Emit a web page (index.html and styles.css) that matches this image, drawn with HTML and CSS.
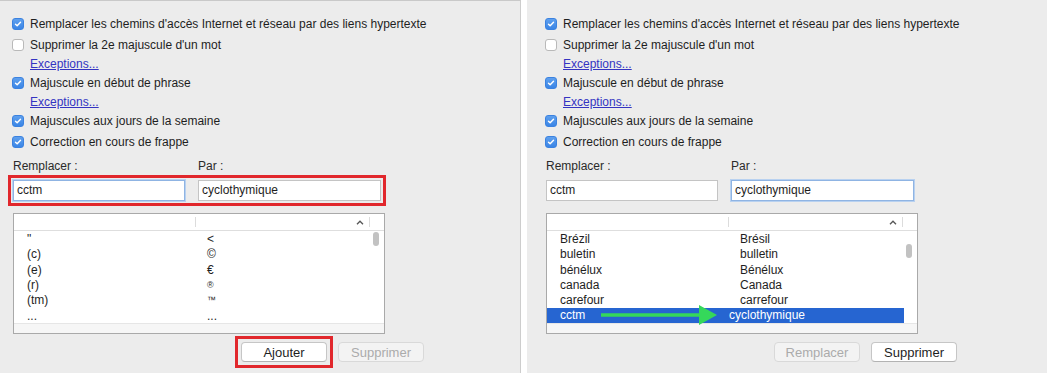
FILE: index.html
```html
<!DOCTYPE html>
<html lang="fr">
<head>
    <meta charset="UTF-8">
    <title>Correction automatique</title>
    <link rel="stylesheet" href="styles.css">
</head>
<body>
<div class="screen">

    <!-- left: before adding the entry -->
    <section class="panel panel-left">
        <div class="options">
            <label class="check-row"><span class="box on"><svg viewBox="0 0 12 12"><path d="M3 6.2l2 2L9 3.8"/></svg></span>Remplacer les chemins d'accès Internet et réseau par des liens hypertexte</label>
            <label class="check-row"><span class="box"></span>Supprimer la 2e majuscule d'un mot</label>
            <div class="link-row"><a href="#">Exceptions...</a></div>
            <label class="check-row"><span class="box on"><svg viewBox="0 0 12 12"><path d="M3 6.2l2 2L9 3.8"/></svg></span>Majuscule en début de phrase</label>
            <div class="link-row"><a href="#">Exceptions...</a></div>
            <label class="check-row"><span class="box on"><svg viewBox="0 0 12 12"><path d="M3 6.2l2 2L9 3.8"/></svg></span>Majuscules aux jours de la semaine</label>
            <label class="check-row"><span class="box on"><svg viewBox="0 0 12 12"><path d="M3 6.2l2 2L9 3.8"/></svg></span>Correction en cours de frappe</label>
        </div>

        <div class="labels">
            <span>Remplacer :</span>
            <span>Par :</span>
        </div>
        <div class="fields marked">
            <div class="field focus">cctm</div>
            <div class="field">cyclothymique</div>
        </div>

        <div class="table">
            <div class="thead">
                <span class="th"></span>
                <span class="th th-sort"><svg viewBox="0 0 8 5"><path d="M1 4.2L4 1.2l3 3"/></svg></span>
            </div>
            <div class="scroll-head"></div>
            <div class="rows">
                <div class="row"><span>"</span><span>&lt;</span></div>
                <div class="row"><span>(c)</span><span>©</span></div>
                <div class="row"><span>(e)</span><span>€</span></div>
                <div class="row"><span>(r)</span><span class="small">®</span></div>
                <div class="row"><span>(tm)</span><span class="small">™</span></div>
                <div class="row"><span>...</span><span>...</span></div>
            </div>
            <div class="scroll"><div class="thumb"></div></div>
            <div class="table-foot"></div>
        </div>

        <div class="buttons">
            <span class="marked btn-mark"><button class="btn">Ajouter</button></span>
            <button class="btn" disabled>Supprimer</button>
        </div>
    </section>

    <!-- right: after adding the entry -->
    <section class="panel panel-right">
        <div class="options">
            <label class="check-row"><span class="box on"><svg viewBox="0 0 12 12"><path d="M3 6.2l2 2L9 3.8"/></svg></span>Remplacer les chemins d'accès Internet et réseau par des liens hypertexte</label>
            <label class="check-row"><span class="box"></span>Supprimer la 2e majuscule d'un mot</label>
            <div class="link-row"><a href="#">Exceptions...</a></div>
            <label class="check-row"><span class="box on"><svg viewBox="0 0 12 12"><path d="M3 6.2l2 2L9 3.8"/></svg></span>Majuscule en début de phrase</label>
            <div class="link-row"><a href="#">Exceptions...</a></div>
            <label class="check-row"><span class="box on"><svg viewBox="0 0 12 12"><path d="M3 6.2l2 2L9 3.8"/></svg></span>Majuscules aux jours de la semaine</label>
            <label class="check-row"><span class="box on"><svg viewBox="0 0 12 12"><path d="M3 6.2l2 2L9 3.8"/></svg></span>Correction en cours de frappe</label>
        </div>

        <div class="labels">
            <span>Remplacer :</span>
            <span>Par :</span>
        </div>
        <div class="fields">
            <div class="field">cctm</div>
            <div class="field focus">cyclothymique</div>
        </div>

        <div class="table">
            <div class="thead">
                <span class="th"></span>
                <span class="th th-sort"><svg viewBox="0 0 8 5"><path d="M1 4.2L4 1.2l3 3"/></svg></span>
            </div>
            <div class="scroll-head"></div>
            <div class="rows">
                <div class="row"><span>Brézil</span><span>Brésil</span></div>
                <div class="row"><span>buletin</span><span>bulletin</span></div>
                <div class="row"><span>bénélux</span><span>Bénélux</span></div>
                <div class="row"><span>canada</span><span>Canada</span></div>
                <div class="row"><span>carefour</span><span>carrefour</span></div>
                <div class="row selected">
                    <span>cctm</span><span>cyclothymique</span>
                    <svg class="arrow" viewBox="0 0 116 20"><path d="M0 8.3h98V0l18 10-18 10v-8.3H0z"/></svg>
                </div>
            </div>
            <div class="scroll"><div class="thumb thumb-low"></div></div>
            <div class="table-foot"></div>
        </div>

        <div class="buttons">
            <button class="btn" disabled>Remplacer</button>
            <button class="btn">Supprimer</button>
        </div>
    </section>

</div>
</body>
</html>
```

FILE: styles.css
```css
html, body {
    margin: 0;
    padding: 0;
    background: #fff;
}

body {
    font-family: 'Liberation Sans', Arial, sans-serif;
    font-size: 12px;
    color: #1e1e1e;
}

.screen {
    display: flex;
    width: 1047px;
    height: 373px;
    gap: 6px;
    overflow: hidden;
}

.panel {
    background-color: #ececec;
    border-top: 1px solid #c9c9c9;
    padding-top: 12px;
    box-sizing: border-box;
    height: 373px;
}

.panel-left {
    width: 521px;
    padding-left: 12px;
    border-right: 1px solid #cdcdcd;
}

.panel-right {
    flex: 1;
    padding-left: 18px;
    border-top-color: #ececec;
}

/* checkboxes */

.options {
    display: flex;
    flex-direction: column;
}

.check-row {
    display: flex;
    align-items: center;
    gap: 6px;
    height: 21px;
}

.box {
    width: 12px;
    height: 12px;
    box-sizing: border-box;
    border: 1px solid #b9b9b9;
    border-radius: 3px;
    background: #fff;
    display: flex;
}

.box.on {
    border-color: #3b82e0;
    background: linear-gradient(#5fa0ee, #3a85e6);
}

.box svg {
    width: 10px;
    height: 10px;
    fill: none;
    stroke: #fff;
    stroke-width: 1.7;
    stroke-linecap: round;
    stroke-linejoin: round;
}

.link-row {
    height: 17px;
    display: flex;
    align-items: center;
    padding-left: 18px;
}

.link-row a {
    color: #3434c2;
    text-decoration: underline;
}

/* replace / with fields */

.labels {
    display: grid;
    grid-template-columns: 172px 183px;
    column-gap: 13px;
    margin: 6px 0 0 1px;
    height: 17px;
    line-height: 17px;
    color: #2a2a2a;
}

.fields {
    display: grid;
    grid-template-columns: 172px 183px;
    column-gap: 13px;
    margin: 5px 0 0 1px;
    width: 368px;
}

.field {
    height: 21px;
    line-height: 19px;
    box-sizing: border-box;
    border: 1px solid #c4c4c4;
    background: #fff;
    padding-left: 3px;
}

.field.focus {
    border-color: #8fb4e3;
    box-shadow: 0 0 0 1px #b8d1f0;
}

/* red annotation frames, square corners */
.marked {
    box-shadow: 0 0 0 2px #ececec, 0 0 0 5px #e1272c;
}

.btn-mark {
    display: flex;
    box-shadow: 0 0 0 3px #ececec, 0 0 0 6px #e1272c;
}

/* substitution list */

.table {
    margin: 12px 0 0 1px;
    width: 372px;
    height: 121px;
    box-sizing: border-box;
    border: 1px solid #a9a9a9;
    background: #fff;
    display: grid;
    grid-template-columns: 1fr 14px;
    grid-template-rows: 17px 92px 1fr;
}

.thead {
    display: grid;
    grid-template-columns: 182px 1fr;
    border-bottom: 1px solid #dedede;
}

.th {
    margin: 3px 0;
    border-right: 1px solid #dcdcdc;
}

.th-sort {
    display: flex;
    justify-content: flex-end;
    align-items: center;
    padding-right: 5px;
}

.th-sort svg {
    width: 8px;
    height: 5px;
    fill: none;
    stroke: #555;
    stroke-width: 1.3;
}

.scroll-head {
    border-bottom: 1px solid #dedede;
}

.rows {
    display: flex;
    flex-direction: column;
}

.row {
    position: relative;
    display: grid;
    grid-template-columns: 182px 1fr;
    height: 15.33px;
    line-height: 17px;
}

.row span:first-child {
    padding-left: 13px;
}

.row span:last-child {
    padding-left: 11px;
}

.row .small {
    font-size: 9px;
}

.row.selected {
    background: #2665d1;
    color: #fff;
    margin-right: -1px;
    line-height: 15px;
}

.arrow {
    position: absolute;
    left: 54px;
    top: -3px;
    width: 116px;
    height: 20px;
    fill: #35d85a;
}

.scroll {
    position: relative;
}

.thumb {
    position: absolute;
    left: 3px;
    top: 1px;
    width: 6px;
    height: 14px;
    border-radius: 3px;
    background: #c2c2c2;
}

.thumb-low {
    top: 13px;
}

.table-foot {
    grid-column: 1 / 3;
    background: #f6f6f6;
    border-top: 1px solid #e6e6e6;
}

/* buttons */

.buttons {
    display: flex;
    gap: 11px;
    margin: 8px 0 0 229px;
}

.btn {
    font-family: 'Liberation Sans', Arial, sans-serif;
    font-size: 13px;
    color: #1e1e1e;
    height: 20px;
    padding: 0;
    width: 86px;
    background: #fff;
    border: 1px solid #c6c6c6;
    border-bottom-color: #b3b3b3;
    border-radius: 4px;
}

.btn:disabled {
    color: #ababab;
    background: #f3f3f3;
    border-color: #d9d9d9;
}
```
